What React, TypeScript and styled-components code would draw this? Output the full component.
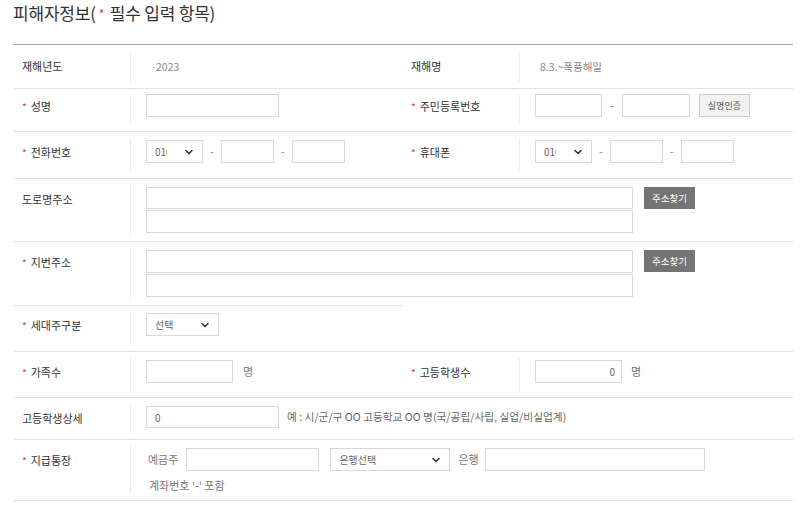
import React from "react";
import styled, { createGlobalStyle } from "styled-components";
import { ChevronDown } from "lucide-react";

const GlobalStyle = createGlobalStyle`
  html, body {
    margin: 0;
    padding: 0;
    background: #fff;
  }
  body {
    font-family: "Noto Sans CJK KR", "Noto Sans", "Liberation Sans", sans-serif;
    color: #333;
  }
  * {
    box-sizing: border-box;
  }
`;

const Req = () => <Star>*</Star>;

const Select: React.FC<{ w: number; value: string; clip?: boolean; ml?: number }> = ({
  w,
  value,
  clip,
  ml = 0,
}) => (
  <SelectWrap $w={w} $ml={ml}>
    <SelectBox defaultValue={value} $clip={clip}>
      <option>{value}</option>
    </SelectBox>
    <Chevron size={12} strokeWidth={3.2} />
  </SelectWrap>
);

export const App: React.FC = (): JSX.Element => {
  return (
    <Page>
      <GlobalStyle />
      <Title>
        피해자정보(<TitleStar>*</TitleStar> 필수 입력 항목)
      </Title>
      <Table>
        <Row $half $pt={9} $pb={11}>
          <Label>재해년도</Label>
          <Value>
            <Plain>
              <Dot>·</Dot>2023
            </Plain>
          </Value>
          <Label>재해명</Label>
          <Value>
            <Plain>8.3.~폭풍해일</Plain>
          </Value>
        </Row>

        <Row $half $pt={5} $pb={14}>
          <Label>
            <Req />
            성명
          </Label>
          <Value>
            <TextInput $w={133} />
          </Value>
          <Label>
            <Req />
            주민등록번호
          </Label>
          <Value>
            <Field $gap={8}>
              <TextInput $w={67} />
              <Dash>-</Dash>
              <TextInput $w={68} />
              <LightButton>실명인증</LightButton>
            </Field>
          </Value>
        </Row>

        <Row $half $pb={15}>
          <Label>
            <Req />
            전화번호
          </Label>
          <Value>
            <Field $gap={7}>
              <Select w={57} value="010" clip />
              <Dash>-</Dash>
              <TextInput $w={53} />
              <Dash>-</Dash>
              <TextInput $w={53} />
            </Field>
          </Value>
          <Label>
            <Req />
            휴대폰
          </Label>
          <Value>
            <Field $gap={7}>
              <Select w={57} value="010" clip />
              <Dash>-</Dash>
              <TextInput $w={53} />
              <Dash>-</Dash>
              <TextInput $w={53} />
            </Field>
          </Value>
        </Row>

        <Row $pb={8}>
          <Label>도로명주소</Label>
          <Value>
            <Field $gap={11} $top>
              <Stack>
                <TextInput $w={487} $h={22} />
                <TextInput $w={487} />
              </Stack>
              <DarkButton>주소찾기</DarkButton>
            </Field>
          </Value>
        </Row>

        <Row $pb={8} $short>
          <Label>
            <Req />
            지번주소
          </Label>
          <Value>
            <Field $gap={11} $top>
              <Stack>
                <TextInput $w={487} $h={23} />
                <TextInput $w={487} />
              </Stack>
              <DarkButton>주소찾기</DarkButton>
            </Field>
          </Value>
        </Row>

        <Row $half $pt={7} $pb={15}>
          <Label>
            <Req />
            세대주구분
          </Label>
          <Value>
            <Select w={73} value="선택" />
          </Value>
        </Row>

        <Row $half $pb={14}>
          <Label>
            <Req />
            가족수
          </Label>
          <Value>
            <Field $gap={10}>
              <TextInput $w={87} />
              <Unit>명</Unit>
            </Field>
          </Value>
          <Label>
            <Req />
            고등학생수
          </Label>
          <Value>
            <Field $gap={9}>
              <TextInput $w={87} $right defaultValue="0" />
              <Unit>명</Unit>
            </Field>
          </Value>
        </Row>

        <Row $pb={10}>
          <Label>고등학생상세</Label>
          <Value>
            <Field $gap={8}>
              <TextInput $w={133} $h={22} defaultValue="0" />
              <LongHint>예 : 시/군/구 OO 고등학교 OO 명(국/공립/사립, 실업/비실업계)</LongHint>
            </Field>
          </Value>
        </Row>

        <Row $pb={6}>
          <Label>
            <Req />
            지급통장
          </Label>
          <Value>
            <Field $gap={0}>
              <Hint $ml={2} $mr={8}>
                예금주
              </Hint>
              <TextInput $w={133} />
              <Select w={120} value="은행선택" ml={11} />
              <Hint $ml={8} $mr={6}>
                은행
              </Hint>
              <TextInput $w={220} />
            </Field>
            <Note>계좌번호 '-' 포함</Note>
          </Value>
        </Row>
      </Table>
    </Page>
  );
};

const Page = styled.div`
  width: 801px;
  padding: 0 8px 0 13px;
`;

const Title = styled.h2`
  margin: 0;
  height: 26px;
  font-size: 17px;
  font-weight: 400;
  line-height: 26px;
  color: #333;
  letter-spacing: -0.2px;
`;

const TitleStar = styled.span`
  display: inline-block;
  color: #e4323c;
  font-size: 12px;
  line-height: 0;
  vertical-align: 1px;
  margin: 0 2px 0 3px;
`;

const Table = styled.div`
  margin-top: 18px;
  width: 780px;
  border-top: 1px solid #a3a3a3;
`;

const Row = styled.div<{ $half?: boolean; $pb: number; $pt?: number; $short?: boolean }>`
  display: grid;
  grid-template-columns: ${(p) => (p.$half ? "118px 271px 118px 1fr" : "118px 1fr")};
  position: relative;
  border-bottom: 1px solid ${(p) => (p.$short ? "transparent" : "#e3e3e3")};
  --pt: ${(p) => p.$pt ?? 8}px;
  --pb: ${(p) => p.$pb}px;

  ${(p) =>
    p.$short &&
    `
    &::after {
      content: "";
      position: absolute;
      left: 0;
      bottom: -1px;
      width: 390px;
      height: 1px;
      background: #e3e3e3;
    }
  `}
`;

const Label = styled.div`
  position: relative;
  display: flex;
  align-items: flex-start;
  padding: calc(var(--pt) + 2px) 0 var(--pb) 9px;
  font-size: 11px;
  line-height: 21px;
  height: 100%;
  color: #333;
  white-space: nowrap;

  &::after {
    content: "";
    position: absolute;
    right: 0;
    top: 6px;
    bottom: 6px;
    width: 1px;
    background: #ececec;
  }
`;

const Star = styled.span`
  color: #e4323c;
  font-size: 10px;
  line-height: 21px;
  margin-right: 4px;
`;

const Value = styled.div`
  padding: var(--pt) 0 var(--pb) 15px;
  font-size: 11px;
  line-height: 1;
  min-width: 0;
`;

const Plain = styled.div`
  padding: 2px 0 0 5px;
  line-height: 21px;
  height: 23px;
  color: #8a8a8a;
  font-size: 10.5px;
`;

const Dot = styled.span`
  display: inline-block;
  width: 5px;
  color: #aaa;
`;

const Field = styled.div<{ $gap: number; $top?: boolean }>`
  display: flex;
  align-items: ${(p) => (p.$top ? "flex-start" : "center")};
  gap: ${(p) => p.$gap}px;
`;

const Stack = styled.div`
  display: flex;
  flex-direction: column;
  gap: 1px;
`;

const TextInput = styled.input<{ $w: number; $h?: number; $right?: boolean }>`
  display: block;
  width: ${(p) => p.$w}px;
  height: ${(p) => p.$h ?? 23}px;
  border: 1px solid #d9d9d9;
  border-radius: 0;
  padding: 0 ${(p) => (p.$right ? "6px" : "8px")};
  margin: 0;
  font-family: inherit;
  font-size: 10px;
  color: #666;
  text-align: ${(p) => (p.$right ? "right" : "left")};
  background: #fff;
  outline: none;
  flex-shrink: 0;
`;

const SelectWrap = styled.div<{ $w: number; $ml: number }>`
  position: relative;
  width: ${(p) => p.$w}px;
  height: 23px;
  margin-left: ${(p) => p.$ml}px;
  flex-shrink: 0;
`;

const SelectBox = styled.select<{ $clip?: boolean }>`
  display: block;
  appearance: none;
  -webkit-appearance: none;
  width: 100%;
  height: 100%;
  border: 1px solid #d9d9d9;
  border-radius: 0;
  background: #fff;
  padding: 0 ${(p) => (p.$clip ? "35px" : "26px")} 0 8px;
  font-family: inherit;
  font-size: 10px;
  color: #666;
  outline: none;
`;

const Chevron = styled(ChevronDown)`
  position: absolute;
  right: 8px;
  top: 50%;
  transform: translateY(-50%);
  color: #333;
  pointer-events: none;
`;

const Dash = styled.span`
  font-size: 11px;
  color: #888;
  line-height: 23px;
`;

const LightButton = styled.button`
  display: block;
  height: 23px;
  padding: 0 8px;
  margin-left: 1px;
  border: 1px solid #cfcfcf;
  background: #f2f2f2;
  color: #555;
  font-family: inherit;
  font-size: 9px;
  border-radius: 0;
`;

const DarkButton = styled.button`
  display: block;
  width: 51px;
  height: 22px;
  padding: 0;
  border: 0;
  background: #747474;
  color: #fff;
  font-family: inherit;
  font-size: 9.5px;
  border-radius: 0;
  flex-shrink: 0;
`;

const Unit = styled.span`
  font-size: 11px;
  color: #777;
`;

const Hint = styled.span<{ $ml?: number; $mr?: number }>`
  font-size: 11px;
  color: #777;
  white-space: nowrap;
  margin: 0 ${(p) => p.$mr ?? 0}px 0 ${(p) => p.$ml ?? 0}px;
`;

const LongHint = styled(Hint)`
  font-size: 10.7px;
  color: #666;
`;

const Note = styled.div`
  margin-top: 5px;
  line-height: 18px;
  font-size: 11px;
  color: #777;
  padding-left: 3px;
`;

export default App;
